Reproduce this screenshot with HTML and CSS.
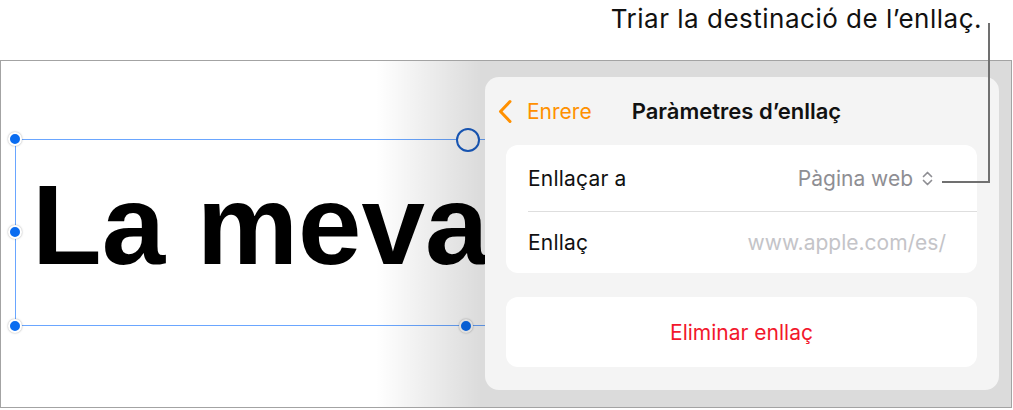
FILE: index.html
```html
<!DOCTYPE html>
<html lang="ca">
<head>
    <meta charset="UTF-8">
    <meta name="viewport" content="width=device-width, initial-scale=1.0">
    <title>Paràmetres d’enllaç</title>
    <link rel="stylesheet" href="styles.css">
</head>
<body>
    <div class="callout">Triar la destinació de l’enllaç.</div>
    <div class="leader"></div>

    <div class="frame">
        <div class="selection">
            <div class="big-text">La meva</div>
            <span class="handle h-tl"></span>
            <span class="handle h-ml"></span>
            <span class="handle h-bl"></span>
            <span class="handle h-bm"></span>
            <span class="rotate"></span>
        </div>

        <div class="panel">
            <div class="panel-header">
                <div class="back">
                    <svg width="16" height="25" viewBox="0 0 16 25">
                        <path d="M13 2.5 L3.5 12.5 L13 22.5" fill="none" stroke="#ff9000" stroke-width="3" stroke-linecap="round" stroke-linejoin="round"/>
                    </svg>
                    <span>Enrere</span>
                </div>
                <div class="panel-title">Paràmetres d’enllaç</div>
            </div>

            <div class="group">
                <div class="row row-first">
                    <span class="label">Enllaçar a</span>
                    <span class="value">
                        Pàgina web
                        <svg width="11" height="15" viewBox="0 0 11 15">
                            <path d="M1.5 5.5 L5.5 1.5 L9.5 5.5 M1.5 9.5 L5.5 13.5 L9.5 9.5" fill="none" stroke="#8e8e93" stroke-width="1.7" stroke-linecap="round" stroke-linejoin="round"/>
                        </svg>
                    </span>
                </div>
                <div class="row row-last">
                    <span class="label">Enllaç</span>
                    <span class="placeholder">www.apple.com/es/</span>
                </div>
            </div>

            <div class="delete">Eliminar enllaç</div>
        </div>
    </div>
</body>
</html>
```

FILE: styles.css
```css
body {
    margin: 0;
    font-family: Inter, "Noto Sans", sans-serif;
    color: #111;
    background-color: #ffffff;
    position: relative;
    width: 1013px;
    height: 410px;
    overflow: hidden;
}
.callout {
    height: 60px;
    box-sizing: border-box;
    padding: 4px 31px 0 0;
    text-align: right;
    font-size: 26px;
    line-height: 30px;
    letter-spacing: 0.5px;
    color: #111;
}
.leader {
    position: absolute;
    left: 942px;
    top: 23px;
    width: 48px;
    height: 160px;
    box-sizing: border-box;
    border-right: 2px solid #707070;
    border-bottom: 2px solid #707070;
    z-index: 5;
}
.frame {
    position: relative;
    width: 1012px;
    height: 348px;
    box-sizing: border-box;
    border: 1px solid #a3a3a3;
    background-color: #ffffff;
    overflow: hidden;
}
.frame::after {
    content: "";
    position: absolute;
    inset: 0;
    background: linear-gradient(to right, rgba(0, 0, 0, 0) 375px, rgba(0, 0, 0, 0.14) 480px);
    z-index: 1;
    pointer-events: none;
}
.selection {
    position: relative;
    margin: 78px 0 0 14px;
    width: 903px;
    height: 187px;
    box-sizing: border-box;
    border: 1px solid #6aa6ff;
}
.big-text {
    font-family: "Liberation Sans", Arial, sans-serif;
    font-weight: bold;
    font-size: 114px;
    line-height: 114px;
    padding: 28px 0 0 16px;
    white-space: nowrap;
    color: #000;
}
.handle {
    position: absolute;
    width: 10px;
    height: 10px;
    border-radius: 50%;
    background-color: #0a6cf0;
    border: 2px solid #ffffff;
    box-shadow: 0 0 2px rgba(0, 0, 0, 0.35);
}
.h-tl { left: -8px; top: -8px; }
.h-ml { left: -8px; top: 85px; }
.h-bl { left: -8px; bottom: -8px; }
.h-bm { left: 443px; bottom: -8px; }
.rotate {
    position: absolute;
    left: 440px;
    top: -12px;
    width: 20px;
    height: 20px;
    border-radius: 50%;
    border: 2px solid #1a5fc8;
    background-color: #ffffff;
}
.panel {
    position: absolute;
    left: 484px;
    top: 16px;
    width: 514px;
    height: 313px;
    box-sizing: border-box;
    padding: 0 22px 23px 21px;
    background-color: #f4f4f4;
    border-radius: 14px;
    z-index: 2;
}
.panel-header {
    height: 68px;
    display: flex;
    align-items: center;
    gap: 40px;
    margin-left: -9px;
    font-size: 21px;
}
.back {
    display: flex;
    align-items: center;
    gap: 14px;
    color: #ff9000;
}
.back svg {
    display: block;
}
.panel-title {
    font-size: 22px;
    font-weight: 600;
    color: #111;
}
.group {
    background-color: #ffffff;
    border-radius: 12px;
    font-size: 21px;
}
.row {
    display: flex;
    align-items: center;
    justify-content: space-between;
    margin-left: 22px;
}
.row-first {
    height: 66px;
    border-bottom: 1px solid #dedede;
    padding-right: 44px;
}
.row-last {
    height: 61px;
    padding-right: 31px;
}
.label {
    letter-spacing: 0.2px;
}
.value {
    display: flex;
    align-items: center;
    gap: 9px;
    color: #8e8e93;
}
.placeholder {
    color: #c4c4c8;
}
.delete {
    margin-top: 24px;
    height: 70px;
    display: flex;
    align-items: center;
    justify-content: center;
    background-color: #ffffff;
    border-radius: 12px;
    font-size: 21px;
    color: #f2182c;
}
```
